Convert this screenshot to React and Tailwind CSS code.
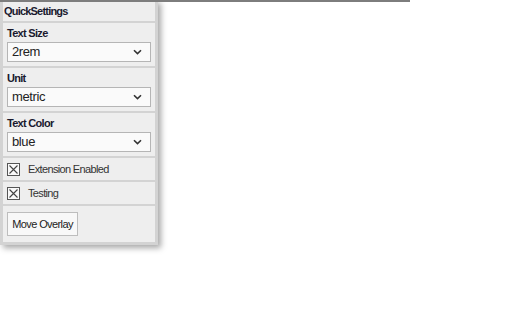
import React from 'react';

const Chevron = () => (
    <svg width="9" height="6" viewBox="0 0 9 6" className="shrink-0">
        <path d="M1 1.2 L4.5 4.6 L8 1.2" fill="none" stroke="#333" strokeWidth="1.6" />
    </svg>
);

const Picker = ({ label, value }) => (
    <div className="bg-[#eeeeee] px-[4px] pt-[4px] pb-[4px]">
        <div className="text-[11px] leading-[13px] font-bold tracking-[-0.7px] text-[#1a1a2e]">{label}</div>
        <div className="mt-[2px] h-[20px] flex items-center justify-between bg-[#fafafa] border border-[#b5b5b5] pl-[4px] pr-[8px]">
            <span className="text-[13px] tracking-[-0.4px] text-[#222]">{value}</span>
            <Chevron />
        </div>
    </div>
);

const Check = ({ label }) => (
    <div className="h-[22px] bg-[#eeeeee] flex items-center gap-[8px] px-[4px]">
        <svg width="13" height="13" viewBox="0 0 13 13" className="shrink-0">
            <rect x="0.5" y="0.5" width="12" height="12" fill="#fafafa" stroke="#555" />
            <path d="M2.5 2.5 L10.5 10.5 M10.5 2.5 L2.5 10.5" stroke="#444" strokeWidth="1.1" />
        </svg>
        <span className="text-[11px] tracking-[-0.65px] text-[#333]">{label}</span>
    </div>
);

export default function App() {
    return (
        <div className="relative w-[512px] h-[320px] bg-white font-['Liberation_Sans',Arial,sans-serif]">
            <div className="relative z-10 w-[410px] h-[2px] bg-[#7d7d7d]"></div>

            <div className="absolute top-0 left-0 w-[158px] bg-[#d3d3d3] px-[3px] pt-[1px] pb-[3px] flex flex-col gap-[2px] shadow-[3px_3px_6px_rgba(0,0,0,0.35)]">
                <div className="h-[20px] bg-[#eeeeee] flex items-center px-[1px]">
                    <span className="text-[11px] font-bold tracking-[-0.8px] text-[#1a1a2e]">QuickSettings</span>
                </div>
                <Picker label="Text Size" value="2rem" />
                <Picker label="Unit" value="metric" />
                <Picker label="Text Color" value="blue" />
                <Check label="Extension Enabled" />
                <Check label="Testing" />
                <div className="bg-[#eeeeee] px-[4px] pt-[5px] pb-[6px]">
                    <button className="h-[24px] w-[71px] bg-[#f8f8f8] border border-[#bdbdbd] text-[11px] tracking-[-0.6px] text-[#222]">
                        Move Overlay
                    </button>
                </div>
            </div>
        </div>
    );
}
